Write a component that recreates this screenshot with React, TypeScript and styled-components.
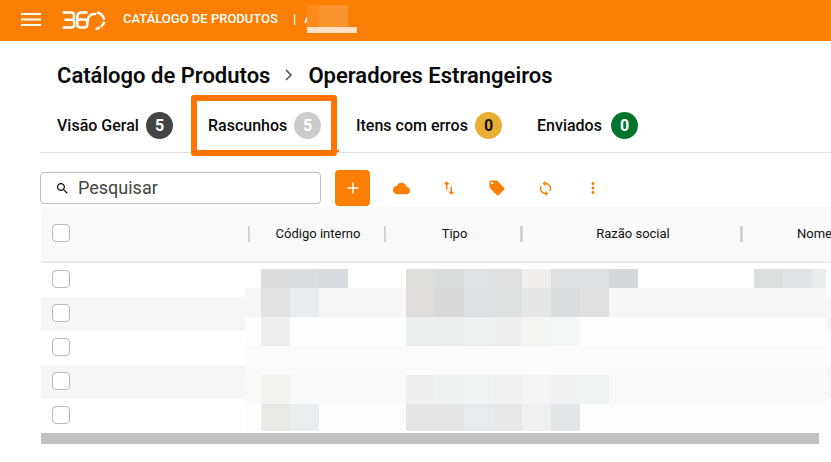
import React from "react";
import styled, { createGlobalStyle } from "styled-components";

const ORANGE = "#fb7f04";

const GlobalStyle = createGlobalStyle`
  * { box-sizing: border-box; }
  body {
    margin: 0;
    background: #fff;
    color: #111;
    font-family: Roboto, "Noto Sans", sans-serif;
    overflow-x: hidden;
  }
  button, input { font-family: inherit; }
`;

const TopBar = styled.header`
  display: flex;
  align-items: center;
  height: 41px;
  padding: 0 20px;
  background: ${ORANGE};
  color: #fff;
`;

const PlainButton = styled.button`
  display: flex;
  align-items: center;
  justify-content: center;
  padding: 0;
  border: 0;
  background: none;
  color: inherit;
  cursor: pointer;
`;

const Logo = styled.a`
  display: flex;
  margin-left: 20px;
  color: inherit;
`;

const ProductName = styled.div`
  display: flex;
  gap: 15px;
  margin-left: 17px;
  padding-bottom: 3px;
  font-size: 13px;
  line-height: 20px;
  font-weight: 500;
  white-space: nowrap;
`;

const AccountName = styled.span`
  width: 3px;
  margin-left: 8px;
  padding-bottom: 3px;
  overflow: hidden;
  font-size: 13px;
  line-height: 20px;
  font-weight: 500;
`;

const AccountMask = styled.div`
  display: flex;
  flex-direction: column;
  align-self: flex-start;
  width: 50px;
  margin-top: 5px;
`;

const AccountBlocks = styled.div`
  display: flex;
  height: 22px;
`;

const AccountBlock = styled.span<{ $width: number; $color: string }>`
  width: ${(p) => p.$width}px;
  background: ${(p) => p.$color};
`;

const AccountLine = styled.span`
  height: 6px;
  background: #ffe2c6;
`;

const Main = styled.main`
  padding: 21px 0 18px 40px;
`;

const Breadcrumb = styled.nav`
  display: flex;
  align-items: center;
  height: 26px;
  padding-left: 17px;
  font-size: 22px;
  font-weight: 600;
  color: #0b0b0b;
  white-space: nowrap;
`;

const CrumbLink = styled.a`
  color: inherit;
  text-decoration: none;
`;

const CrumbArrow = styled.svg`
  width: 8px;
  height: 12px;
  margin: 0 15px;
`;

const Crumb = styled.h1`
  margin: 0;
  font-size: inherit;
  font-weight: inherit;
`;

const Tabs = styled.div`
  display: flex;
  height: 65px;
  border-bottom: 1px solid #dedede;
`;

const Tab = styled.button<{ $width: number; $active?: boolean }>`
  position: relative;
  display: flex;
  align-items: center;
  justify-content: space-between;
  width: ${(p) => p.$width}px;
  height: 64px;
  padding: 12px 18px 0 17px;
  border: 0;
  border-bottom: 2px solid ${(p) => (p.$active ? "#ff7300" : "transparent")};
  background: none;
  color: #0b0b0b;
  font-size: 16px;
  font-weight: 500;
  white-space: nowrap;
  cursor: pointer;
`;

const Count = styled.span<{ $bg: string; $fg: string }>`
  display: grid;
  place-items: center;
  width: 27px;
  height: 27px;
  border-radius: 50%;
  background: ${(p) => p.$bg};
  color: ${(p) => p.$fg};
  font-weight: 700;
`;

const Highlight = styled.span`
  position: absolute;
  inset: 7px 2px -6px 0;
  border: 6px solid #ff7300;
  border-radius: 3px;
`;

const Toolbar = styled.div`
  display: flex;
  align-items: center;
  height: 36px;
  margin-top: 17px;
`;

const SearchBox = styled.label`
  display: flex;
  align-items: center;
  gap: 8px;
  width: 281px;
  height: 32px;
  padding-left: 14px;
  border: 1px solid #bdbdbd;
  border-radius: 4px;
`;

const SearchInput = styled.input`
  width: 220px;
  height: 28px;
  padding: 0 0 2px;
  border: 0;
  outline: 0;
  background: none;
  font-size: 18px;
  color: #333;
  &::placeholder { color: #444; opacity: 1; }
`;

const AddButton = styled(PlainButton)`
  width: 35px;
  height: 36px;
  margin-left: 14px;
  border-radius: 4px;
  background: ${ORANGE};
  color: #fff;
`;

const Tools = styled.div`
  display: flex;
  gap: 28px;
  margin-left: 21px;
  color: ${ORANGE};
`;

const ToolButton = styled(PlainButton)`
  width: 20px;
  height: 20px;
`;

const TableArea = styled.section`
  position: relative;
  margin: 1px 0 0 1px;
  overflow: hidden;
`;

const Table = styled.table`
  width: 100%;
  table-layout: fixed;
  border-collapse: separate;
  border-spacing: 0;
`;

const Col = styled.col<{ $width?: number }>`
  width: ${(p) => (p.$width ? `${p.$width}px` : "auto")};
`;

const HeadCell = styled.th<{ $bar?: number; $last?: boolean }>`
  height: 56px;
  padding: ${(p) => (p.$last ? "0 0 2px 54px" : "0 0 2px")};
  border-bottom: 2px solid #ebebeb;
  background: linear-gradient(#d2d2d2, #d2d2d2) right 19px / ${(p) => p.$bar ?? 0}px 16px no-repeat #f9f9f9;
  font-size: 13px;
  font-weight: 400;
  text-align: ${(p) => (p.$last ? "left" : "center")};
  white-space: nowrap;
  &:first-child { padding: 0; border-top-left-radius: 8px; text-align: left; }
`;

const BodyRow = styled.tr`
  height: 34px;
  &:nth-child(even) { background: #f6f6f6; }
`;

const BodyCell = styled.td`
  padding: 0;
`;

const Check = styled.input`
  appearance: none;
  display: block;
  width: 18px;
  height: 18px;
  margin: 0 0 2px 11px;
  border: 1px solid #b9b9b9;
  border-radius: 4px;
  background: #fff;
  &:checked { background: ${ORANGE}; }
`;

const Mosaic = styled.div`
  position: absolute;
  top: 62px;
  left: 204px;
  display: grid;
  grid-template-columns: 16px repeat(19, 29px) 14px;
  grid-template-rows: 19px repeat(4, 29px) 27px;
`;

const Tile = styled.span<{ $color: string }>`
  background: ${(p) => p.$color};
`;

const ScrollBar = styled.div`
  height: 11px;
  margin-right: 12px;
  background: #c1c1c1;
`;

const columns = [
  { label: "Código interno", width: 136, bar: 2 },
  { label: "Tipo", width: 137, bar: 3 },
  { label: "Razão social", width: 220, bar: 3 },
];

const tabs = [
  { label: "Visão Geral", count: 5, bg: "#444645", fg: "#fff", width: 151 },
  { label: "Rascunhos", count: 5, bg: "#cbcbcb", fg: "#fff", width: 148, active: true },
  { label: "Itens com erros", count: 0, bg: "#e8ae35", fg: "#111", width: 181 },
  { label: "Enviados", count: 0, bg: "#04742f", fg: "#fff", width: 136 },
];

/* Each mask row has a base colour and the tiles that differ from it. */
const maskRows: { base: string; tiles: Record<number, string> }[] = [
  {
    base: "#fff",
    tiles: {
      1: "#dcdcdc", 2: "#dbdcde", 3: "#d9dadd", 6: "#dededc", 7: "#dadcdb", 8: "#e0e1e3", 9: "#dfdfdf",
      10: "#f0efed", 11: "#dfe0e2", 12: "#dfe0e2", 13: "#d6d7d9", 18: "#dcdedd", 19: "#e2e3e5", 20: "#e9eaec",
    },
  },
  {
    base: "#f6f6f6",
    tiles: {
      1: "#e3e3e3", 2: "#e9ebee", 6: "#deddda", 7: "#d8d8d8", 8: "#dedfe2", 9: "#dde0de",
      10: "#e6e6e6", 11: "#dbdcdf", 12: "#dfdfdf",
    },
  },
  {
    base: "#fdfdfd",
    tiles: { 1: "#efefef", 6: "#eeefef", 7: "#edefee", 8: "#eff1f0", 9: "#efefef", 10: "#f5f5f3", 11: "#f4f7f6" },
  },
  { base: "#fbfbfb", tiles: { 10: "#fcfcfc", 11: "#fcfcfc" } },
  {
    base: "#f9f9f9",
    tiles: {
      1: "#f2f2f0", 6: "#efefef", 7: "#f0f2f1", 8: "#f1f3f2", 9: "#f0f0f0", 10: "#f4f4f4", 11: "#f1f1f1", 12: "#f2f4f3",
    },
  },
  {
    base: "#fdfdfd",
    tiles: { 1: "#e9e9e6", 2: "#ebedef", 6: "#e5e5e5", 7: "#e5e5e5", 8: "#e9eaed", 9: "#e8e8e8", 10: "#f0f0f0", 11: "#e4e5e8" },
  },
];

const MenuIcon = () => (
  <svg width="22" height="18" viewBox="0 0 22 18" aria-hidden="true">
    <path d="M1 2h20M1 7.5h20M1 13h20" stroke="currentColor" strokeWidth="2" />
  </svg>
);

const LogoMark = () => (
  <svg width="44" height="20" viewBox="0 0 44 20" fill="none" stroke="currentColor" strokeWidth="2.5" aria-hidden="true">
    <path d="M.5 1.5h9q2.5 0 2.5 2.3v2.9q0 2.1-2.3 2.1H2.5M9.7 8.8q2.6 0 2.6 2.4v2.6q0 2.6-2.8 2.6H.5" />
    <path d="M25.5 1.5h-5.7q-4.5 0-4.5 4.5v7.2q0 3.2 3 3.2h4q3 0 3-3v-1.7q0-3.2-3-3.2h-6.8" />
    <path d="M25.2 12q.4-8.2 6.3-9 2-.2 2.7.4" />
    <path d="M35.3 1.2q5.4 1.4 7 7.6M42.2 10.7q-.5 3-3.2 4.8M38 16.2q-1.9 1.8-4.4 1.8" />
  </svg>
);

const icons = {
  cloud: "M19.35 10.04C18.67 6.59 15.64 4 12 4 9.11 4 6.6 5.64 5.35 8.04 2.34 8.36 0 10.91 0 14c0 3.31 2.69 6 6 6h13c2.76 0 5-2.24 5-5 0-2.64-2.05-4.78-4.65-4.96z",
  swap: "M16 17.01V10h-2v7.01h-3L15 21l4-3.99h-3zM9 3 5 6.99h3V14h2V6.99h3L9 3z",
  tag: "m21.41 11.58-9-9C12.05 2.22 11.55 2 11 2H4c-1.1 0-2 .9-2 2v7c0 .55.22 1.05.59 1.42l9 9c.36.36.86.58 1.41.58s1.05-.22 1.41-.59l7-7c.37-.36.59-.86.59-1.41s-.23-1.06-.59-1.42zM5.5 7C4.67 7 4 6.33 4 5.5S4.67 4 5.5 4 7 4.67 7 5.5 6.33 7 5.5 7z",
  sync: "M12 4V1L8 5l4 4V6c3.31 0 6 2.69 6 6 0 1.01-.25 1.97-.7 2.8l1.46 1.46C19.54 15.03 20 13.57 20 12c0-4.42-3.58-8-8-8zm0 14c-3.31 0-6-2.69-6-6 0-1.01.25-1.97.7-2.8L5.24 7.74C4.46 8.97 4 10.43 4 12c0 4.42 3.58 8 8 8v3l4-4-4-4v3z",
  more: "M12 8c1.1 0 2-.9 2-2s-.9-2-2-2-2 .9-2 2 .9 2 2 2zm0 2c-1.1 0-2 .9-2 2s.9 2 2 2 2-.9 2-2-.9-2-2-2zm0 6c-1.1 0-2 .9-2 2s.9 2 2 2 2-.9 2-2-.9-2-2-2z",
  search: "M15.5 14h-.79l-.28-.27C15.41 12.59 16 11.11 16 9.5 16 5.91 13.09 3 9.5 3S3 5.91 3 9.5 5.91 16 9.5 16c1.61 0 3.09-.59 4.23-1.57l.27.28v.79l5 4.99L20.49 19l-4.99-5zm-6 0C7.01 14 5 11.99 5 9.5S7.01 5 9.5 5 14 7.01 14 9.5 11.99 14 9.5 14z",
};

const Icon = ({ name, size }: { name: keyof typeof icons; size: number }) => (
  <svg width={size} height={size} viewBox="0 0 24 24" fill="currentColor" aria-hidden="true">
    <path d={icons[name]} />
  </svg>
);

const tools: { icon: keyof typeof icons; label: string; size: number }[] = [
  { icon: "cloud", label: "Nuvem", size: 17 },
  { icon: "swap", label: "Importar e exportar", size: 18 },
  { icon: "tag", label: "Etiquetas", size: 18 },
  { icon: "sync", label: "Atualizar", size: 17 },
  { icon: "more", label: "Mais opções", size: 18 },
];

export default function App() {
  return (
    <>
      <GlobalStyle />
      <TopBar>
        <PlainButton aria-label="Menu"><MenuIcon /></PlainButton>
        <Logo href="#" aria-label="360"><LogoMark /></Logo>
        <ProductName>
          <span>CATÁLOGO DE PRODUTOS</span>
          <span>|</span>
        </ProductName>
        <AccountName>A</AccountName>
        <AccountMask>
          <AccountBlocks>
            <AccountBlock $width={12} $color="#fd8a1b" />
            <AccountBlock $width={29} $color="#fc952f" />
          </AccountBlocks>
          <AccountLine />
        </AccountMask>
      </TopBar>
      <Main>
        <Breadcrumb>
          <CrumbLink href="#">Catálogo de Produtos</CrumbLink>
          <CrumbArrow viewBox="0 0 8 12" fill="none" stroke="#555" strokeWidth="1.6">
            <path d="m1 1 5 5-5 5" />
          </CrumbArrow>
          <Crumb>Operadores Estrangeiros</Crumb>
        </Breadcrumb>
        <Tabs role="tablist">
          {tabs.map((t) => (
            <Tab key={t.label} role="tab" aria-selected={!!t.active} $width={t.width} $active={t.active}>
              {t.label}
              <Count $bg={t.bg} $fg={t.fg}>{t.count}</Count>
              {t.active && <Highlight />}
            </Tab>
          ))}
        </Tabs>
        <Toolbar>
          <SearchBox>
            <Icon name="search" size={15} />
            <SearchInput placeholder="Pesquisar" aria-label="Pesquisar" />
          </SearchBox>
          <AddButton aria-label="Adicionar">
            <svg width="12" height="12" viewBox="0 0 12 12" stroke="currentColor" strokeWidth="1.4">
              <path d="M6 .5v11M.5 6h11" />
            </svg>
          </AddButton>
          <Tools>
            {tools.map((t) => (
              <ToolButton key={t.icon} aria-label={t.label}><Icon name={t.icon} size={t.size} /></ToolButton>
            ))}
          </Tools>
        </Toolbar>
        <TableArea>
          <Table>
            <colgroup>
              <Col $width={209} />
              {columns.map((c) => <Col key={c.label} $width={c.width} />)}
              <Col />
            </colgroup>
            <thead>
              <tr>
                <HeadCell $bar={2}><Check type="checkbox" aria-label="Selecionar todos" /></HeadCell>
                {columns.map((c) => <HeadCell key={c.label} $bar={c.bar}>{c.label}</HeadCell>)}
                <HeadCell $last>Nome</HeadCell>
              </tr>
            </thead>
            <tbody>
              {[1, 2, 3, 4, 5].map((n) => (
                <BodyRow key={n}>
                  <BodyCell><Check type="checkbox" aria-label={`Selecionar linha ${n}`} /></BodyCell>
                  <BodyCell /><BodyCell /><BodyCell /><BodyCell />
                </BodyRow>
              ))}
            </tbody>
          </Table>
          <Mosaic aria-hidden="true">
            {maskRows.flatMap((row, r) =>
              Array.from({ length: 21 }, (_, c) => <Tile key={`${r}-${c}`} $color={row.tiles[c] ?? row.base} />)
            )}
          </Mosaic>
          <ScrollBar />
        </TableArea>
      </Main>
    </>
  );
}
